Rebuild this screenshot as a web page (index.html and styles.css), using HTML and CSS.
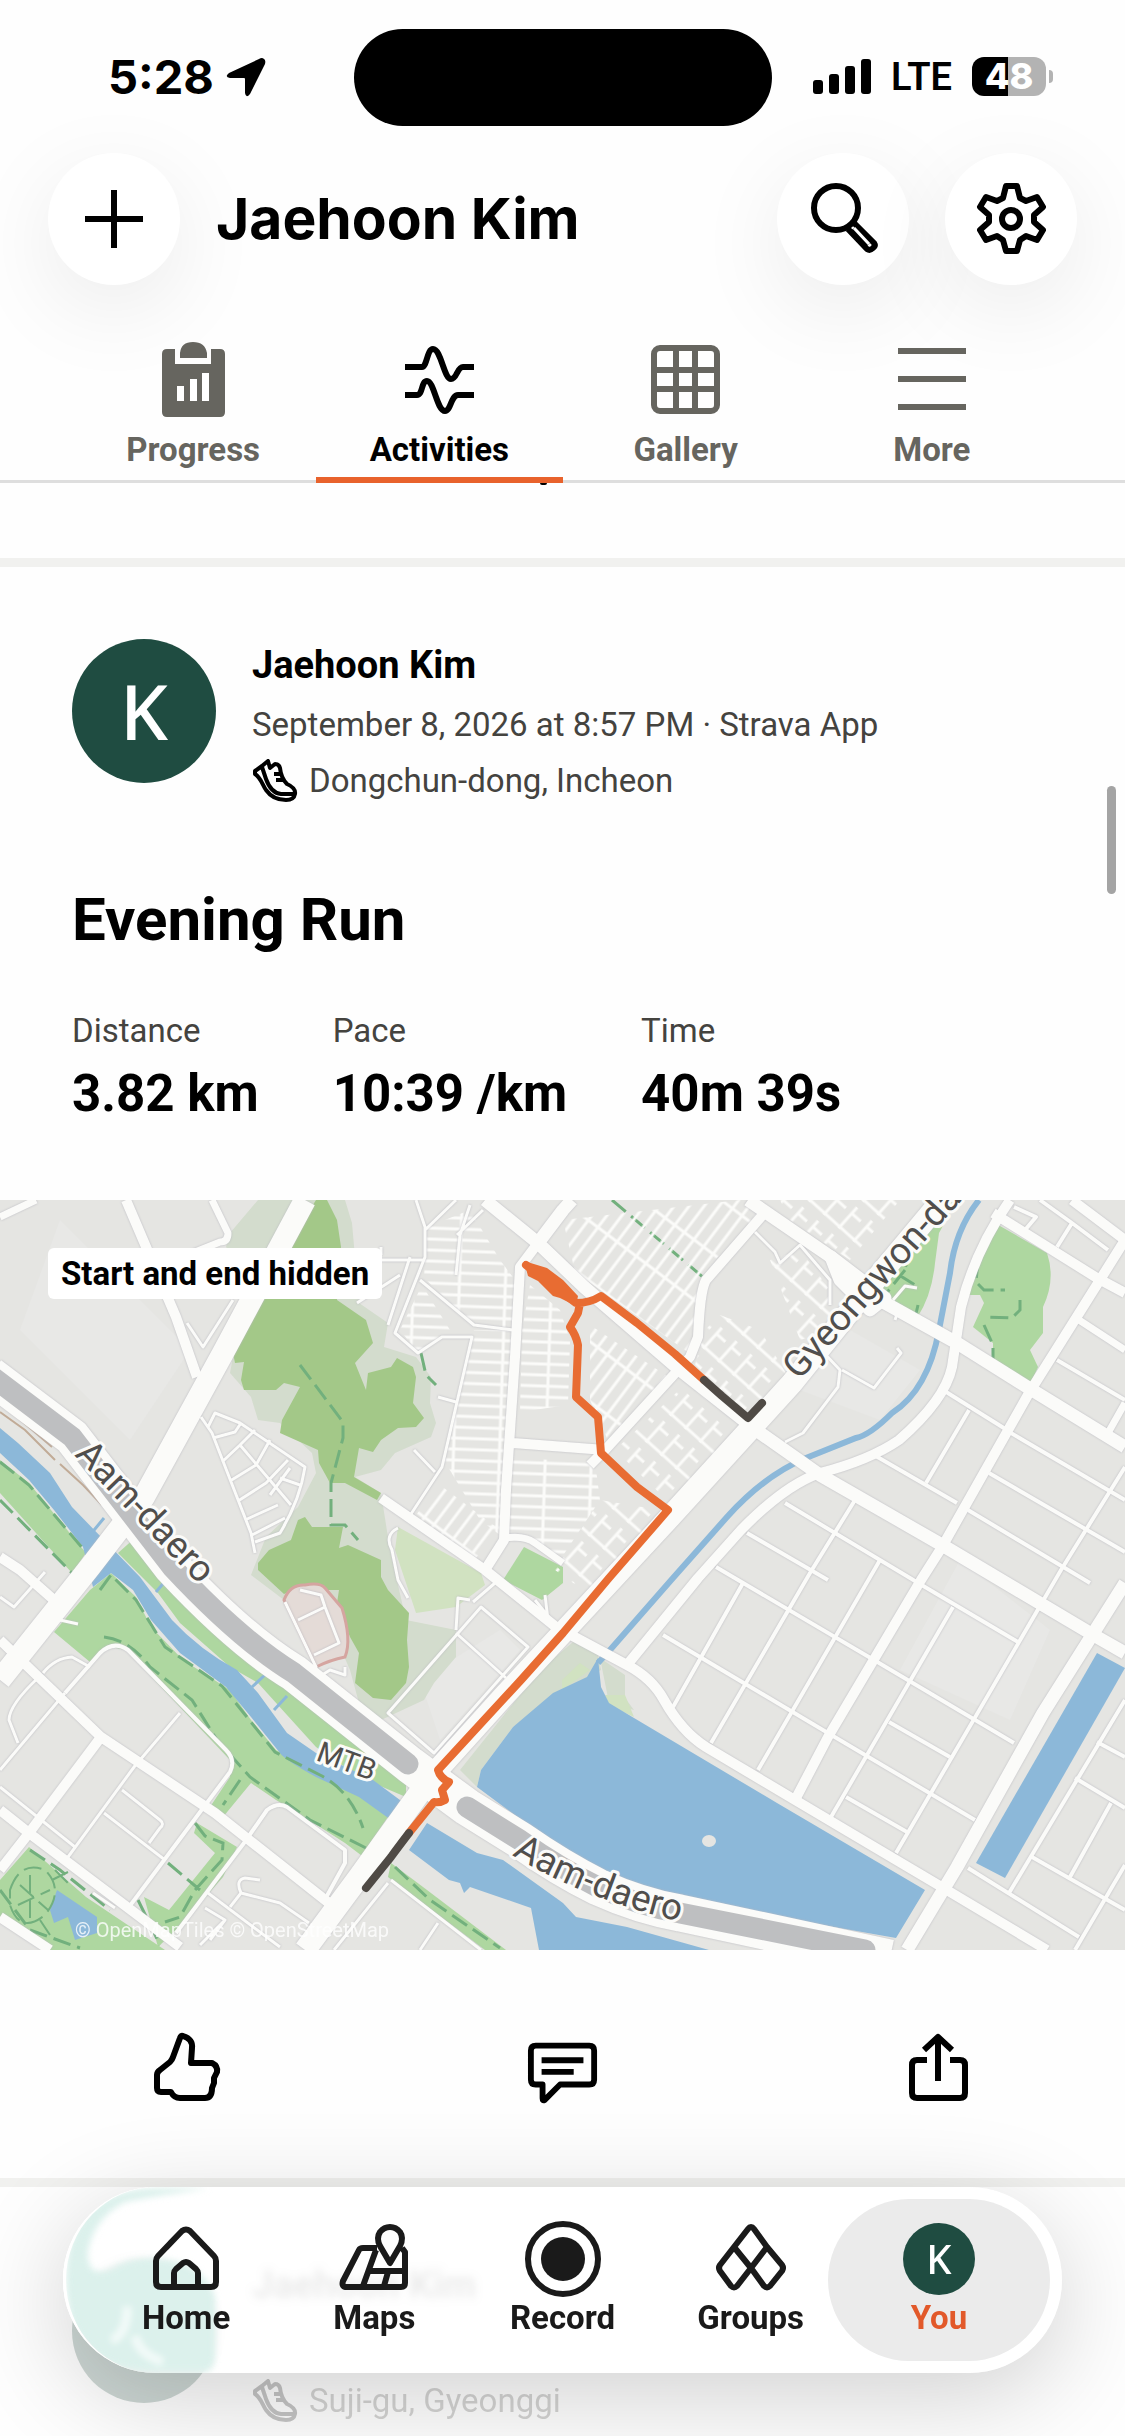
FILE: index.html
```html
<!DOCTYPE html>
<html lang="en">
<head>
    <meta charset="UTF-8">
    <meta name="viewport" content="width=device-width, initial-scale=1.0">
    <title>Jaehoon Kim - Activities</title>
    <link rel="stylesheet" href="styles.css">
</head>
<body>

<svg class="sprite" aria-hidden="true">
    <symbol id="shoe" viewBox="0 0 46 44">
        <path d="M3 12 L10 7 L16 2 L18 9 L23 5 Q27 5 28 9 Q29 19 35 25 Q44 29 43 35 Q42 41 34 41 Q21 41 14 31 C10 25 9 19 3 15 Z M10 8 L14 20 Q19 34 29 35 H42 M22 15 H28 M24 21 H31"/>
    </symbol>
</svg>

<div class="status">
    <div class="time">
        <span>5:28</span>
        <svg class="arrow" viewBox="0 0 40 40"><path d="M38 2 Q40 3 39 7 L24 37 Q20 42 19 36 V22 Q19 21 18 21 H4 Q-2 20 3 16 L33 2 Q36 0 38 2 Z"/></svg>
    </div>
    <div class="island"></div>
    <div class="signal">
        <svg class="bars" viewBox="0 0 58 36">
            <rect x="0" y="21" width="10" height="14" rx="3"/>
            <rect x="16" y="15" width="10" height="20" rx="3"/>
            <rect x="32" y="7" width="10" height="28" rx="3"/>
            <rect x="48" y="0" width="10" height="35" rx="3"/>
        </svg>
        <span class="lte">LTE</span>
        <span class="battery">48</span>
    </div>
</div>

<header class="header">
    <button class="round" aria-label="Add">
        <svg viewBox="0 0 72 72"><path d="M36 7 V65 M7 36 H65" class="line"/></svg>
    </button>
    <h1>Jaehoon Kim</h1>
    <button class="round" aria-label="Search">
        <svg viewBox="0 0 72 72"><g class="line"><circle cx="29" cy="25" r="22"/><path d="M47 40 L67 60 Q69 63 66 65 Q63 68 60 66 L41 46"/></g><path d="M47 45 L62 61" class="line"/><path d="M47 45 L62 61" class="slit"/></svg>
    </button>
    <button class="round" aria-label="Settings">
        <svg viewBox="0 0 72 72"><g class="line"><path d="M31 3 H42 L45 15 L51 18 L62 14 L68 24 L59 32 V39 L68 47 L62 57 L51 53 L45 57 L42 68 H31 L28 57 L22 53 L11 57 L5 47 L14 39 V32 L5 24 L11 14 L22 18 L28 15 Z"/><circle cx="36" cy="36" r="9"/></g></svg>
    </button>
</header>

<nav class="tabs">
    <a href="#progress">
        <svg viewBox="0 0 72 76"><path d="M10 8 H18 V23 H54 V8 H63 Q68 8 68 13 V71 Q68 76 63 76 H10 Q5 76 5 71 V13 Q5 8 10 8 Z M23 17 V12 Q24 1 36 1 Q48 1 50 12 V17 Z"/><path class="cut" d="M20 45 h7 v15 h-7 Z M33 38 h7 v22 h-7 Z M45 32 h7 v28 h-7 Z"/></svg>
        Progress
    </a>
    <a href="#activities" class="active">
        <svg viewBox="0 0 72 76"><path class="stroke" d="M2 26 H19 C24 26 24 8 30 8 C38 8 41 38 48 38 C54 38 54 26 60 26 H71 M2 54 H14 C20 54 18 40 24 40 C31 40 34 70 42 70 C48 70 48 54 55 54 H71"/></svg>
        Activities
    </a>
    <a href="#gallery">
        <svg viewBox="0 0 72 76"><g class="stroke"><rect x="4" y="7" width="63" height="63" rx="6"/><path d="M26 7 V70 M45 7 V70 M4 29 H67 M4 48 H67"/></g></svg>
        Gallery
    </a>
    <a href="#more">
        <svg viewBox="0 0 72 76"><path class="stroke" d="M2 10 H70 M2 38 H70 M2 66 H70"/></svg>
        More
    </a>
</nav>

<main>
    <div class="spacer"></div>

    <article class="card">
        <div class="top">
            <div class="avatar">K</div>
            <div class="meta">
                <h2>Jaehoon Kim</h2>
                <p>September 8, 2026 at 8:57 PM · Strava App</p>
                <p class="place"><svg><use href="#shoe"/></svg>Dongchun-dong, Incheon</p>
            </div>
        </div>
        <h3>Evening Run</h3>
        <dl class="stats">
            <div><dt>Distance</dt><dd>3.82 km</dd></div>
            <div><dt>Pace</dt><dd>10:39 /km</dd></div>
            <div><dt>Time</dt><dd>40m 39s</dd></div>
        </dl>

        <div class="map">
            <span class="chip">Start and end hidden</span>
            <svg viewBox="0 0 1125 750">
                <defs>
                    <pattern id="lanes" width="46" height="11" patternUnits="userSpaceOnUse" patternTransform="rotate(2)"><path d="M0 2 H46 M2 0 V11" class="lane"/></pattern>
                    <pattern id="lanesSteep" width="48" height="12" patternUnits="userSpaceOnUse" patternTransform="rotate(-53)"><path d="M0 2 H48 M2 0 V12" class="lane"/></pattern>
                    <pattern id="lanesLoose" width="36" height="20" patternUnits="userSpaceOnUse" patternTransform="rotate(-48)"><path d="M0 2 H28 M2 0 V20 M20 2 V14" class="lane"/></pattern>
                    <path id="aam" d="M512 655 Q585 700 690 724"/>
                </defs>

                <rect width="1125" height="750" class="land"/>
                <path class="land2" d="M60 20 L190 150 L130 240 L20 130 Z M850 130 L920 170 L880 220 L800 190 Z M960 360 L1050 430 L1010 520 L900 470 Z M420 480 L500 430 L520 450 L440 540 Z"/>

                <!-- hills -->
                <path class="pale" d="M258 0 L345 0 L352 23 L359 103 L388 123 L384 147 L416 157 L431 177 L430 203 L436 223 L431 237 L395 253 L381 270 L355 277 L381 293 L390 350 L406 420 L456 430 L456 457 L434 483 L424 500 L381 520 L359 503 L350 470 L337 440 L284 400 L251 375 L266 337 L298 307 L316 273 L312 253 L280 223 L258 220 L251 197 L230 173 L233 157 L260 90 L226 47 L230 33 Z"/>
                <path class="field" d="M398 327 L481 373 L485 385 L456 407 L416 413 L395 350 Z"/>
                <path class="hill" d="M316 0 H327 L337 20 L341 47 L337 100 L366 120 L373 143 L355 163 L366 190 L368 173 L391 167 L397 158 L413 167 L416 177 L413 203 L424 218 L416 227 L398 228 L381 240 L373 252 L359 248 L354 277 L381 293 L377 300 L345 283 H330 L319 263 L318 250 L280 233 L282 220 L300 187 L284 183 L276 190 L244 190 L241 180 L244 162 L235 163 L233 153 L258 100 L287 47 Z"/>
                <path class="hill" d="M305 317 L312 327 H343 L339 348 L348 345 L381 360 V377 L388 390 L409 413 L407 440 L409 467 L406 483 L391 500 L373 498 L355 483 L359 453 L350 437 L337 403 L339 390 H320 L309 384 L284 394 L258 370 V363 L269 350 L291 340 L298 320 Z"/>

                <!-- parks -->
                <g class="park">
                    <path d="M524 347 L563 367 V383 L542 400 L503 380 Z"/>
                    <path d="M993 22 L1047 53 Q1056 80 1043 107 V133 L1030 150 L1038 167 L1030 185 L993 163 V143 L973 127 L984 103 L980 95 H969 L975 57 Z"/>
                    <path d="M957 0 L939 33 L935 63 Q932 95 917 118 L875 95 L914 33 L942 0 Z"/>
                    <path d="M0 260 L29 283 L86 353 L72 373 L0 293 Z"/>
                    <path d="M111 373 L136 397 L151 427 L183 460 L230 490 L251 520 L276 550 L323 573 L359 590 L388 617 L370 643 V662 L345 643 L298 613 L276 600 L251 583 L223 617 L208 610 L230 577 V560 L126 450 L111 447 L90 462 L54 432 L90 390 Z"/>
                    <path d="M136 337 L172 377 L208 403 L251 453 L305 497 L406 583 V597 L359 577 L316 547 L258 483 L230 467 L180 423 L158 393 L118 353 Z"/>
                    <path d="M197 623 L237 647 L223 677 L183 723 L158 747 L144 697 L169 710 L215 653 L194 633 Z"/>
                    <path d="M29 647 L86 697 L165 750 H50 L0 717 V680 Z"/>
                    <path d="M391 663 L427 690 L506 750 H485 L388 677 Z"/>
                </g>
                <path class="pale" d="M573 442 L598 455 L601 470 L553 497 L513 527 L481 570 L477 587 L460 570 L540 470 Z M600 458 L625 475 V498 L634 510 L609 503 Z"/>
                <path class="field" d="M562 480 L580 463 L590 470 L562 490 Z M605 495 L625 495 L634 517 L609 505 Z"/>
                <path class="stadium" d="M284 400 Q290 384 305 385 Q320 382 325 388 L342 408 Q352 440 345 457 Q330 460 316 467 Z"/>

                <!-- water -->
                <g class="water">
                    <path d="M0 228 L18 243 L50 273 L72 307 L104 340 L140 377 L172 420 Q200 450 237 470 L258 493 L287 533 L316 553 L373 580 L404 603 L372 642 L391 620 L359 597 L316 577 Q285 560 280 553 L251 517 L226 487 L180 453 L151 420 L133 390 L111 373 L93 387 L83 347 L54 310 L29 280 L0 253 Z"/>
                    <path d="M427 623 L477 653 L503 660 L563 703 L576 717 L627 727 L709 750 H539 L531 708 L470 687 L464 693 L460 683 L449 680 L409 650 Z"/>
                    <path d="M598 458 L601 487 L609 503 L634 518 L777 603 L925 690 L896 738 L777 717 L627 683 Q600 682 562 650 L477 587 L481 570 L513 527 L553 493 L587 477 Z"/>
                    <path d="M1097 453 L1125 468 L1005 678 L976 663 Z"/>
                    <path d="M57 690 L97 717 V733 L75 740 L68 717 L54 723 L50 710 Z"/>
                    <path class="brook" d="M167 379 L156 392 M266 474 L252 487 M287 496 L274 510 M104 318 L90 335"/>
                    <path class="creek" d="M979 0 Q955 30 950 73 L939 130 Q928 190 892 213 Q870 235 856 238 L806 258 Q765 275 727 317 L673 378 L610 450 L598 463"/>
                </g>
                <ellipse cx="709" cy="641" rx="7" ry="6" class="land"/>

                <!-- trails -->
                <path class="trail" d="M300 165 L343 222 V238 L331 283 V325 L345 325 L358 340 M421 153 L426 175 L436 185 M612 0 L704 78 M0 262 L29 285 L84 350 M0 300 L72 373 M100 390 L111 375 L136 400 L165 447 L222 486 L275 552 L320 575 Q350 590 363 628 M104 437 Q130 440 150 467 L192 500 L217 540 L250 577 L310 620 L370 650 M240 580 L223 605 M195 623 L205 636 L223 643 L222 660 L195 690 L180 717 L165 722 M168 663 L200 690 M30 650 L60 670 L110 710 M0 690 L30 730 L80 748 M395 667 L430 700 L500 748 M138 700 L160 745 M978 60 L976 82 L984 90 H1005 M1020 100 V110 L1012 118 L986 117 M984 125 L993 145 V165 M912 50 L905 68 M905 70 L885 95 M899 75 L915 85 M918 105 L915 118"/>
                <path class="trail thin" d="M10 690 Q20 660 45 670 Q65 690 45 715 Q20 735 10 705 Z M20 685 L48 710 M18 705 L50 690 M30 675 V720 M40 720 L50 735 M55 670 L70 685 M52 680 L68 672"/>
                <path class="rail" d="M0 212 L25 230 L55 260 M5 207 L30 228 L52 247 M60 264 L83 285 L102 305"/>

                <!-- dense residential blocks -->
                <path fill="url(#lanes)" d="M427 27 L470 10 L500 60 L515 80 V128 L474 125 L424 78 Z"/>
                <path fill="url(#lanes)" d="M474 130 H512 L508 290 L500 335 L480 320 L445 262 Z"/>
                <path fill="url(#lanes)" d="M400 130 L422 85 L450 130 L418 153 Z"/>
                <path fill="url(#lanes)" d="M530 85 L560 110 L570 140 L568 205 L520 212 L522 130 Z"/>
                <path fill="url(#lanes)" d="M512 258 L595 262 L600 300 L560 360 L508 330 Z"/>
                <path fill="url(#lanesSteep)" d="M412 320 L440 285 L500 330 L470 365 Z"/>
                <path fill="url(#lanesSteep)" d="M590 125 L670 178 L610 245 L590 200 Z"/>
                <path fill="url(#lanesSteep)" d="M563 20 L740 0 L760 14 L700 75 L692 155 L575 72 Z"/>
                <path fill="url(#lanesLoose)" d="M600 300 L660 310 L590 395 L555 370 Z M690 180 L735 235 L672 305 L615 250 Z"/>
                <path fill="url(#lanesLoose)" d="M705 130 L720 115 L760 130 L790 180 L745 215 L695 165 Z M770 60 L800 50 L830 90 L835 130 L800 140 Z M780 0 H900 L850 60 L790 20 Z"/>

                <g class="casing">
                    <!-- side streets -->
                    <path class="minor" d="M416 0 L425 27 V57 L395 133 L418 153 L442 137 H472 L442 267 L409 317 M420 80 L474 125 L513 130 M456 0 L425 30 M470 5 L460 35 L456 75 M457 35 L483 10 M355 60 H425 M381 55 V47 M410 57 L388 125 M357 103 L400 75 M438 197 L456 202 M398 328 Q384 335 392 350 L398 380 L408 398 M414 250 L435 272"/>
                    <path class="minor" d="M201 217 L212 233 L251 333 L255 353 M208 227 L215 213 L240 223 L305 267 Q300 300 280 333 L255 342 M240 245 L291 305 M213 238 L235 232 L241 223 M222 262 L240 245 L255 230 M230 281 L256 265 L270 240 M238 301 L266 283 L288 260 M245 320 L278 305 M252 335 L285 318 M270 295 L290 268 M280 278 L300 285"/>
                    <path class="minor" d="M388 513 L481 407 L528 447 L434 553 Z M456 433 L506 478 M456 430 L458 398 L470 400 M473 402 L495 383 M535 400 L555 425 M545 395 L548 420"/>
                    <path class="minor" d="M285 402 L316 467 L314 480 L330 470 L345 475 V467 M298 420 L325 407 L339 443 L314 455 M325 407 L321 395 L300 390"/>
                    <path class="minor" d="M187 123 L203 147 L233 100 M0 587 L75 647 M137 563 L68 657 M122 590 L160 620 Q165 624 160 628 L149 643 M104 613 L165 660 M180 513 L140 560 M39 477 Q9 505 9 520 L18 543 M65 493 L0 570 M43 473 Q55 458 72 457 L90 467 M0 397 L14 407 L45 372 M208 693 L280 747 M230 707 L241 693 Q235 680 245 678 L260 680 M241 693 L280 703 L309 723 M391 680 L481 750 M388 683 L334 750 M438 723 L420 750 M60 420 L78 424 M93 693 L115 708 M205 708 L225 720 L200 745 M225 720 L210 740"/>
                    <path class="minor2" d="M65 493 L100 453 Q114 440 128 450 L226 550 Q236 560 230 572 L129 707 M323 703 L345 663 V650 L287 607 Q278 602 267 610 L244 643 L176 733"/>

                    <!-- grid south east -->
                    <path class="minor2" d="M874 255 L957 303 M943 190 L1007 230 M1011 233 L1125 300 M1057 160 L1125 200 M989 273 L1125 352 M968 310 L1090 383 M785 303 L925 387 L1018 442 M747 333 L828 380 M716 367 L874 460 L1014 543 M663 435 L828 533 L975 620 M889 522 L950 557 M846 597 L907 632 M968 668 L1079 737 M1032 657 L1125 710 M1097 542 L1125 557 M1075 578 L1125 608"/>
                    <path class="minor2" d="M969 210 L926 283 M855 300 L810 373 L711 543 M743 383 L673 507 M880 360 L758 570 M953 407 L831 617 M1125 267 L1061 370 L896 653 M1125 500 L1009 693 M1111 603 L1070 677 M1125 665 L1075 750 M1014 7 L1036 17 L1025 30 M1040 0 L1072 23 L1108 50 M1072 23 L1057 47"/>
                    <path class="minor" d="M824 153 L840 170 L838 187 L803 233 L785 242 M842 170 L874 188 L901 153 L897 148 M755 32 L775 52 L780 63 L800 45 L830 80 V105 M893 100 L905 86 L917 88 M895 120 L900 105"/>

                    <!-- expressway -->
                    <path class="express" d="M-10 175 L72 237 L172 367 Q240 440 294 473 L410 565 L467 607 L520 640 Q560 668 598 687 Q640 706 680 713 L890 758"/>

                    <path class="road r7" d="M212 0 L228 33 Q228 42 220 42 L180 58 M0 17 L36 0 M504 338 Q525 335 535 343 L563 363 M1079 120 L1125 150 M1108 233 L1125 203"/>
                    <path class="road r10" d="M126 0 L176 117 L197 177 M0 357 L20 370 L54 400 M538 43 L520 67 L515 157 L506 290 L504 340 L485 370 M513 243 L605 250 M767 10 L706 80 Q700 90 698 137 L690 157 L605 250 L590 265"/>
                    <path class="road r10" d="M0 440 L101 537 L215 613 L334 707 M101 537 L29 633 L0 670 M0 610 L29 633 L180 747 M0 717 L50 750"/>
                    <path class="road r10" d="M381 298 L485 370 L556 427 L627 465 Q652 478 664 500 Q682 532 706 547 L795 600 L935 683 L1047 750"/>
                    <path class="road r10" d="M1010 0 Q975 50 961 107 L952 167 Q945 200 899 240 Q870 260 820 273 Q785 285 741 330 L698 378 L627 465"/>
                    <path class="road r10" d="M993 13 L1097 78 L1125 93 M1072 0 L1125 40 L1029 193 L942 347 L921 380 L828 537 L795 600"/>
                    <path class="road r13" d="M485 0 L538 43 L584 87 L680 170 L756 230 L820 275 L942 345 L1090 433 L1125 453 M538 43 L563 10 L572 0 M748 0 L831 57 L867 93 L957 143 L1032 190 L1125 247"/>
                    <path class="road r13" d="M1125 383 L1043 513 L957 667 L907 750 M831 57 L840 80 L870 110 L885 98 Z"/>
                    <path class="road r22" d="M305 0 L223 153 L144 297 L90 367 L0 480 M942 0 L867 90 L792 183 L752 227 L670 317 L503 497 L431 577 L359 677 L305 750"/>
                </g>

                <path class="band" d="M-10 175 L72 237 L172 367 Q240 440 294 473 L408 564 M467 607 L520 640 Q560 668 598 687 Q640 706 680 713 L865 750"/>

                <!-- route -->
                <path class="route" d="M526 65 L576 103 Q590 103 601 96 L637 123 L675 154 L704 180 M580 103 L578 113 L570 127 Q576 135 578 145 L576 197 L598 217 L601 253 L637 287 L668 310 L609 378 L563 433 L521 480 L438 570 Q440 578 449 582 L442 590 L445 600 Q440 603 434 602 L409 633"/>
                <path class="blob" d="M524 61 L547 68 L563 80 L578 96 L576 106 L560 98 L553 96 L538 81 L528 76 Z"/>
                <path class="hidden" d="M704 180 L722 196 L748 218 L762 203 M409 633 Q396 650 391 657 L366 688"/>

                <!-- labels -->
                <g class="label">
                    <text transform="translate(74 255) rotate(46)">Aam-daero</text>
                    <text transform="translate(799 181) rotate(-48)">Gyeongwon-daero</text>
                    <text class="small" transform="translate(315 560) rotate(20)">MTB</text>
                    <text><textPath href="#aam">Aam-daero</textPath></text>
                </g>
                <text x="75" y="737" class="credit">© OpenMapTiles © OpenStreetMap</text>
            </svg>
        </div>

        <div class="actions">
            <button aria-label="Give kudos">
                <svg viewBox="0 0 72 74"><path class="line" d="M31 5 Q41 8 40 17 L39 32 H60 Q66 35 65 41 L62 47 V52 L60 57 Q60 67 53 67 H28 Q22 67 19 61 H9 Q5 61 5 57 V44 Q5 41 8 39 L18 31 Q20 29 21 26 L28 7 Q29 4 31 5 Z"/></svg>
            </button>
            <button aria-label="Comment">
                <svg viewBox="0 0 74 74"><path class="line" d="M9 14 H64 Q69 14 69 19 V49 Q69 54 64 54 H34 L18 70 Q16 71 16 68 V54 H9 Q4 54 4 49 V19 Q4 14 9 14 Z M15 29 H58 M15 41 H48"/></svg>
            </button>
            <button aria-label="Share">
                <svg viewBox="0 0 72 74"><path class="line" d="M25 29 H15 Q10 29 10 34 V62 Q10 67 15 67 H58 Q63 67 63 62 V34 Q63 29 58 29 H48 M36 50 V7 M22 19 L36 6 L50 19"/></svg>
            </button>
        </div>
    </article>

    <article class="card next">
        <div class="top">
            <div class="avatar"></div>
            <div class="meta">
                <h2>Jaehoon Kim</h2>
                <p aria-hidden="true"></p>
                <p class="place"><svg><use href="#shoe"/></svg>Suji-gu, Gyeonggi</p>
            </div>
        </div>
    </article>
</main>

<div class="scrollbar"></div>

<nav class="bottom">
    <svg class="glass" viewBox="0 0 240 186" aria-hidden="true">
        <defs><filter id="soft"><feGaussianBlur stdDeviation="3"/></filter></defs>
        <g filter="url(#soft)">
            <path class="mint" d="M93 0 Q0 0 0 93 Q0 186 93 186 H140 Q152 184 151 165 V110 Q140 80 110 74 Q70 66 46 82 Q22 92 22 65 Q28 30 60 14 Q90 8 145 0 Z"/>
            <path class="shine" d="M62 120 Q62 148 46 154 M70 150 Q74 168 98 176"/>
        </g>
    </svg>
    <a href="#home">
        <svg viewBox="0 0 72 72"><path class="line" d="M11 64 Q6 64 6 59 V38 Q6 35 8 33 L32 8 Q36 5 40 8 L64 33 Q66 35 66 38 V59 Q66 64 61 64 Z M24 63 V50 Q24 48 26 46 L33 40 Q36 38 39 40 L46 46 Q48 48 48 50 V63"/></svg>
        Home
    </a>
    <a href="#maps">
        <svg viewBox="0 0 72 72"><path class="line" d="M39 25 H25 Q22 25 21 27 L5 58 Q3 64 9 64 H63 Q67 64 67 60 V29 L64 25 M38 27 L25 63 M32 48 H67 M50 49 L46 63 M52 40 L42 23 Q38 15 42 9 Q46 4 52 4 Q58 4 62 9 Q66 15 62 23 Z"/></svg>
        Maps
    </a>
    <a href="#record">
        <svg viewBox="0 0 72 72"><circle class="line" cx="36" cy="36" r="35"/><circle cx="36" cy="36" r="22"/></svg>
        Record
    </a>
    <a href="#groups">
        <svg viewBox="0 0 72 72"><path class="line" d="M33 6 Q36 2 39 6 L52 24 L67 42 Q69 45 67 48 L55 63 Q52 66 49 63 L36 45 L22 63 Q19 66 16 63 L5 48 Q3 45 5 42 L19 24 Z M19 24 L36 45 L52 24"/></svg>
        Groups
    </a>
    <a href="#you" class="current">
        <span class="avatar mini">K</span>
        You
    </a>
</nav>

</body>
</html>
```
FILE: styles.css
```css
body {
    margin: 0;
    background: #fefefe;
    color: #000;
    font-family: Roboto, "Liberation Sans", sans-serif;
    overflow-x: hidden;
}
h1, h2, h3, p, dl, dd {
    margin: 0;
}
a {
    text-decoration: none;
    color: inherit;
}
button {
    border: none;
    background: none;
    padding: 0;
    cursor: pointer;
    color: inherit;
}
svg {
    display: block;
    overflow: visible;
}
.sprite {
    position: absolute;
    width: 0;
    height: 0;
}
.line {
    fill: none;
    stroke: currentColor;
    stroke-width: 6;
    stroke-linejoin: round;
}

/* status bar */
.status {
    display: flex;
    justify-content: space-between;
    align-items: center;
    height: 153px;
    padding: 0 79px 0 108px;
    font-family: Inter, sans-serif;
    position: relative;
}
.time {
    display: flex;
    align-items: center;
    gap: 12px;
    font-size: 47px;
    font-weight: 700;
}
.arrow {
    width: 40px;
    height: 40px;
}
.island {
    position: absolute;
    top: 29px;
    left: 50%;
    width: 418px;
    height: 97px;
    margin-left: -209px;
    border-radius: 49px;
    background: #000;
}
.signal {
    display: flex;
    align-items: center;
    gap: 20px;
}
.bars {
    width: 58px;
    height: 36px;
}
.lte {
    font-family: Roboto, sans-serif;
    font-size: 38px;
    font-weight: 600;
}
.battery {
    position: relative;
    width: 74px;
    height: 39px;
    border-radius: 12px;
    background: linear-gradient(90deg, #000 49%, #b3b3b3 49%);
    color: #fff;
    font-size: 36px;
    font-weight: 800;
    line-height: 39px;
    text-align: center;
}
.battery::after {
    content: "";
    position: absolute;
    left: 77px;
    top: 13px;
    width: 4px;
    height: 13px;
    border-radius: 0 5px 5px 0;
    background: #b3b3b3;
}

/* header */
.header {
    display: flex;
    align-items: center;
    gap: 36px;
    padding: 0 48px;
}
.header h1 {
    flex: 1;
    font-family: Inter, sans-serif;
    font-size: 57px;
    font-weight: 700;
    line-height: 72px;
}
.round {
    width: 132px;
    height: 132px;
    border-radius: 50%;
    background: #fff;
    box-shadow: 0 24px 90px rgba(0, 0, 0, 0.08);
    display: flex;
    align-items: center;
    justify-content: center;
}
.round svg {
    width: 72px;
    height: 72px;
}
.slit {
    stroke: #fff;
    stroke-width: 3;
}

/* tabs */
.tabs {
    position: relative;
    display: flex;
    margin-top: 56px;
    padding: 0 70px;
    box-shadow: inset 0 -3px #dedede;
}
.tabs a {
    flex: 1;
    display: flex;
    flex-direction: column;
    align-items: center;
    gap: 13px;
    padding-bottom: 13px;
    color: #66655f;
    font-size: 33px;
    font-weight: 700;
    line-height: 40px;
}
.tabs svg {
    width: 72px;
    height: 76px;
    fill: currentColor;
}
.tabs .stroke {
    fill: none;
    stroke: currentColor;
    stroke-width: 6;
}
.tabs .cut {
    fill: #fff;
}
.tabs .active {
    position: relative;
    color: #000;
    box-shadow: inset 0 -6px #e8622c;
}
.tabs .active::after {
    content: "";
    position: absolute;
    right: 16px;
    bottom: -2px;
    width: 7px;
    height: 2px;
    border-radius: 0 0 4px 4px;
    background: #000;
}
.spacer {
    height: 75px;
}

/* activity card */
.card {
    border-top: 9px solid #f1f1ef;
    padding-top: 72px;
}
.top {
    display: flex;
    gap: 36px;
    padding: 0 72px;
}
.avatar {
    width: 144px;
    height: 144px;
    border-radius: 50%;
    background: #1f4c41;
    color: #fff;
    font-family: "Noto Sans", sans-serif;
    font-size: 76px;
    font-weight: 500;
    line-height: 144px;
    text-align: center;
}
.meta h2 {
    font-size: 38px;
    font-weight: 700;
    line-height: 48px;
    margin: 2px 0 8px;
}
.meta p {
    color: #44433f;
    font-size: 33px;
    line-height: 56px;
    min-height: 56px;
}
.meta .place {
    display: flex;
    align-items: center;
    gap: 11px;
}
.place svg {
    width: 46px;
    height: 44px;
    fill: none;
    stroke: #000;
    stroke-width: 4;
    stroke-linejoin: round;
}
.card h3 {
    margin: 75px 72px 55px;
    font-size: 60px;
    font-weight: 700;
    line-height: 72px;
}
.stats {
    display: flex;
    gap: 74px;
    padding: 0 72px;
}
.stats dt {
    color: #44433f;
    font-size: 33px;
    line-height: 40px;
    margin-bottom: 13px;
}
.stats dd {
    font-size: 51px;
    font-weight: 700;
    line-height: 60px;
}

/* map */
.map {
    position: relative;
    margin-top: 76px;
    overflow: hidden;
}
.map svg {
    width: 100%;
    overflow: hidden;
}
.chip {
    position: absolute;
    top: 48px;
    left: 48px;
    padding: 0 13px;
    border-radius: 6px;
    background: #fff;
    font-size: 33px;
    font-weight: 700;
    line-height: 51px;
}
.land { fill: #e5e5e2; }
.land2 { fill: #e8e8e6; }
.pale { fill: #d3dccd; }
.field { fill: #d1e2c1; }
.hill { fill: #a3c888; }
.park { fill: #aed7a0; }
.water { fill: #8cb8d9; }
.stadium { fill: #e4dbd7; stroke: #d5a5a0; stroke-width: 3; }
.creek { fill: none; stroke: #8cb8d9; stroke-width: 6; }
.brook { fill: none; stroke: #8cb8d9; stroke-width: 3; }
.trail { fill: none; stroke: #72b07d; stroke-width: 3; stroke-dasharray: 18 7; }
.thin { stroke-width: 2; }
.rail { fill: none; stroke: #c1ab97; stroke-width: 2; }
.lane { fill: none; stroke: #fbfbf9; stroke-width: 3; }
.casing {
    fill: none;
    stroke: #fbfbf9;
    stroke-linejoin: round;
    filter: drop-shadow(0 0 1px #b9b9c0);
}
.minor { stroke-width: 3; }
.minor2 { stroke-width: 4; }
.r7 { stroke-width: 7; }
.r10 { stroke-width: 10; }
.r13 { stroke-width: 13; }
.r22 { stroke-width: 22; }
.express { stroke-width: 37; }
.band { fill: none; stroke: #bebfc1; stroke-width: 21; stroke-linecap: round; }
.route, .hidden {
    fill: none;
    stroke: #e86c32;
    stroke-width: 8;
    stroke-linecap: round;
    stroke-linejoin: round;
}
.blob { fill: #e86c32; }
.hidden { stroke: #4f4a45; }
.label {
    fill: #504e4c;
    stroke: #fbfbf9;
    stroke-width: 6;
    stroke-linejoin: round;
    paint-order: stroke;
    font-size: 37px;
}
.label .small { font-size: 29px; }
.credit { fill: #fff; opacity: 0.8; font-size: 20px; }

/* kudos, comment, share */
.actions {
    display: flex;
    height: 220px;
    padding-top: 8px;
}
.actions button {
    flex: 1;
    display: flex;
    align-items: center;
    justify-content: center;
}
.actions svg {
    width: 72px;
    height: 74px;
}

/* next card runs under the bottom bar */
.next {
    height: 168px;
}
.next .avatar,
.next .meta {
    opacity: 0.22;
}

.scrollbar {
    position: absolute;
    top: 786px;
    right: 9px;
    width: 9px;
    height: 108px;
    border-radius: 5px;
    background: #a4a4a4;
}

/* bottom bar */
.bottom {
    position: fixed;
    left: 63px;
    right: 63px;
    bottom: 63px;
    display: flex;
    box-sizing: border-box;
    height: 186px;
    padding: 12px 29px;
    border-radius: 93px;
    background: rgba(255, 255, 255, 0.65);
    backdrop-filter: blur(4px);
    box-shadow: 0 24px 100px rgba(0, 0, 0, 0.18);
    color: #1a1a1a;
}
.bottom a {
    position: relative;
    flex: 1;
    display: flex;
    flex-direction: column;
    align-items: center;
    gap: 3px;
    padding-top: 24px;
    font-size: 33px;
    font-weight: 700;
    line-height: 40px;
}
.bottom a svg {
    width: 72px;
    height: 72px;
    fill: currentColor;
}
.bottom a .line {
    fill: none;
}
.bottom .glass {
    position: absolute;
    left: 0;
    top: 0;
    width: 240px;
    height: 186px;
    border-radius: 93px 0 0 93px;
    overflow: hidden;
    box-sizing: border-box;
    border-left: 3px solid #fff;
}
.mint { fill: #dcf1ec; }
.shine { fill: none; stroke: #f3fbf9; stroke-width: 9; }
.bottom .current {
    color: #e2592a;
}
.current::before {
    content: "";
    position: absolute;
    inset: 0 -17px;
    z-index: -1;
    border-radius: 81px;
    background: #ebebeb;
}
.mini {
    width: 72px;
    height: 72px;
    font-size: 40px;
    line-height: 72px;
}
```
